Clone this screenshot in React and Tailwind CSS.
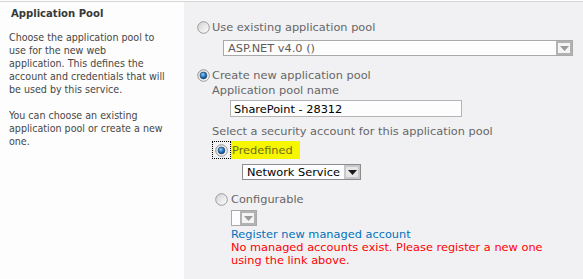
import React from 'react';

const tahoma = { fontFamily: '"DejaVu Sans Condensed", "DejaVu Sans", sans-serif' };
const verdana = { fontFamily: '"DejaVu Sans", Verdana, sans-serif' };

function Radio({ checked }) {
  return (
    <svg width="13" height="13" viewBox="0 0 13 13" className="block flex-none">
      <defs>
        <linearGradient id="rg" x1="0" y1="0" x2="1" y2="1">
          <stop offset="0" stopColor="#d2d2d2" />
          <stop offset="1" stopColor="#ffffff" />
        </linearGradient>
        <radialGradient id="dot" cx="0.4" cy="0.35" r="0.7">
          <stop offset="0" stopColor="#8fd0ff" />
          <stop offset="0.5" stopColor="#2b7cc4" />
          <stop offset="1" stopColor="#0b3c70" />
        </radialGradient>
      </defs>
      <circle cx="6.5" cy="6.5" r="5.8" fill="url(#rg)" stroke="#9a9a9a" strokeWidth="1" />
      {checked && <circle cx="6.5" cy="6.5" r="3.4" fill="url(#dot)" stroke="#1d3f66" strokeWidth="0.6" />}
    </svg>
  );
}

function Arrow({ dark }) {
  return (
    <svg width="9" height="5" viewBox="0 0 9 5" className="block">
      <path d="M0 0h9L4.5 5z" fill={dark ? '#1a1a1a' : '#9a9a9a'} />
    </svg>
  );
}

function Select({ value, width, disabled }) {
  return (
    <div
      className={[
        'flex h-[16px] items-stretch border bg-[#fcfdfc]',
        disabled ? 'border-[#a9a9a9]' : 'border-[#8c8c8c]',
      ].join(' ')}
      style={{ width }}
    >
      <div className={['flex-1 truncate pl-1 leading-[14px]', disabled ? 'text-[#5c5c5c]' : 'text-black'].join(' ')}>
        {value}
      </div>
      <div
        className={[
          'flex w-[16px] flex-none items-center justify-center border-2',
          disabled ? 'border-[#b2b2b2] bg-[#f4f4f4]' : 'border-[#c8c8c8] bg-[#e6e6e6]',
        ].join(' ')}
      >
        <Arrow dark={!disabled} />
      </div>
    </div>
  );
}

export default function App() {
  return (
    <div className="h-[279px] w-[583px] overflow-hidden bg-[#fcfdfc] pt-px">
      <div className="flex h-full border-t border-[#d6d6d6]">
        {/* description column */}
        <div className="w-[184px] flex-none bg-[#fcfdfc] pl-[9px] pt-[5px] text-[10.6px] leading-[13px] text-[#474747]" style={tahoma}>
          <h3 className="pl-[2px] text-[11.2px] font-bold leading-[14px] text-[#383838]">Application Pool</h3>
          <p className="mt-[10px]">
            Choose the application pool to
            <br />
            use for the new web
            <br />
            application. This defines the
            <br />
            account and credentials that will
            <br />
            be used by this service.
          </p>
          <p className="mt-[13px]">
            You can choose an existing
            <br />
            application pool or create a new
            <br />
            one.
          </p>
        </div>

        {/* options column */}
        <div className="flex-1 bg-[#f1f1f3] pl-[13px] pt-[18px] text-[11.35px] leading-[15px] text-[#666666]" style={verdana}>
          <label className="flex items-center gap-[2px]">
            <Radio />
            <span>Use existing application pool</span>
          </label>
          <div className="ml-[26px] mt-[5px]">
            <Select value="ASP.NET v4.0 ()" width={350} disabled />
          </div>

          <label className="mt-[12px] flex items-center gap-[2px]">
            <Radio checked />
            <span>Create new application pool</span>
          </label>
          <div className="pl-[15px]">
            <div>Application pool name</div>
            <input
              readOnly
              value="SharePoint - 28312"
              className="ml-[18px] mt-[2px] block h-[17px] w-[232px] border border-[#b4b4b4] bg-[#fcfdfc] px-[3px] text-black outline-none"
            />
            <div className="mt-[7px]">Select a security account for this application pool</div>

            <div className="mt-[2px] flex items-center">
              <span className="flex h-[18px] w-[19px] items-center justify-center border border-dotted border-black">
                <Radio checked />
              </span>
              <span className="h-[18px] bg-[#f6f600] pl-[1px] pr-[7px] leading-[19px] text-[#6e6e18]">Predefined</span>
            </div>
            <div className="ml-[30px] mt-[5px]">
              <Select value="Network Service" width={119} />
            </div>

            <label className="mt-[12px] flex items-center gap-[3px] pl-[3px]">
              <Radio />
              <span>Configurable</span>
            </label>
            <div className="ml-[19px] mt-[3px] flex h-[16px] w-[26px] items-stretch border border-[#a9a9a9] bg-[#fcfdfc]">
              <div className="flex-1" />
              <div className="flex w-[16px] items-center justify-center border-2 border-[#b2b2b2] bg-[#f4f4f4]">
                <Arrow />
              </div>
            </div>
            <div className="ml-[19px] mt-[2px] leading-[13px]">
              <a className="text-[#0072bc]">Register new managed account</a>
              <div className="text-[#ff0000]">
                No managed accounts exist. Please register a new one
                <br />
                using the link above.
              </div>
            </div>
          </div>
        </div>
      </div>
    </div>
  );
}
